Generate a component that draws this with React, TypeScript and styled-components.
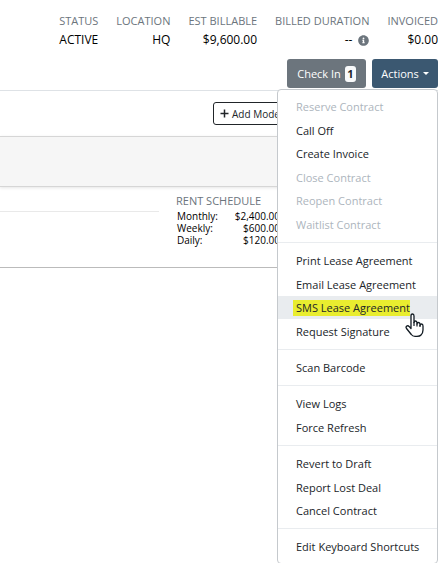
import React from "react";
import styled, { createGlobalStyle } from "styled-components";
import { FaInfoCircle } from "react-icons/fa";

const GlobalStyle = createGlobalStyle`
  *, *::before, *::after { box-sizing: border-box; }
  body {
    margin: 0;
    background: #fff;
    color: #000;
    font: 11px/18px "Open Sans", "Noto Sans", sans-serif;
  }
  button { font-family: inherit; cursor: pointer; }
`;

const Page = styled.main`
  display: flex;
  flex-direction: column;
  min-height: 100vh;
`;

const Stats = styled.dl`
  display: flex;
  justify-content: flex-end;
  gap: 18px;
  margin: 0;
  padding-top: 12px;
  white-space: nowrap;
`;

const Stat = styled.div`
  text-align: right;
`;

const StatLabel = styled.dt`
  color: #6c757d;
  line-height: 18px;
`;

const StatValue = styled.dd`
  display: flex;
  align-items: center;
  justify-content: flex-end;
  gap: 6px;
  margin: 0;
  font-size: 12px;
  line-height: 20px;
  svg { color: #6c757d; }
`;

const Toolbar = styled.div`
  display: flex;
  justify-content: flex-end;
  gap: 6px;
  padding: 9px 0 2px;
  border-bottom: 1px solid #dee2e6;
`;

const ToolButton = styled.button<{ $primary?: boolean }>`
  display: flex;
  align-items: center;
  justify-content: center;
  gap: 4px;
  width: ${(p) => (p.$primary ? 66 : 79)}px;
  height: 29px;
  padding: 0;
  border: 0;
  border-radius: 3px;
  background: ${(p) => (p.$primary ? "#3b5871" : "#6c757d")};
  color: #fff;
  font-size: 11px;
  white-space: nowrap;
`;

const Badge = styled.span`
  padding: 0 2px;
  border-radius: 3px;
  background: #f8f9fa;
  color: #212529;
  font-weight: 700;
  line-height: 16px;
  min-width: 11px;
`;

const Caret = styled.span`
  border: 3px solid transparent;
  border-top-color: #fff;
  border-bottom: 0;
`;

const Dropdown = styled.div`
  position: relative;
`;

const Menu = styled.div`
  position: absolute;
  z-index: 1;
  top: 100%;
  right: 0;
  width: 161px;
  margin-top: 1px;
  padding: 5px 0;
  border: 1px solid #c5c9cd;
  border-radius: 4px;
  background: #fff;
`;

const MenuGroup = styled.div`
  & + & {
    margin-top: 6px;
    padding-top: 6px;
    border-top: 1px solid #e9ecef;
  }
`;

const MenuItem = styled.button<{ $active?: boolean }>`
  display: flex;
  align-items: center;
  width: 100%;
  height: 23px;
  padding: 1px 0 0 15px;
  border: 0;
  background: ${(p) => (p.$active ? "#e9ecef" : "transparent")};
  color: #212529;
  font-size: 11px;
  line-height: 16px;
  text-align: left;
  white-space: nowrap;
  &:nth-child(even) { height: 24px; }
  &:disabled { color: #adb5bd; }
`;

const ItemText = styled.span<{ $marked?: boolean }>`
  padding: 0 0 0 3px;
  background: ${(p) => (p.$marked ? "#e9ed2f" : "transparent")};
`;

const Pointer = styled.svg`
  position: absolute;
  top: 223px;
  right: 13px;
  pointer-events: none;
`;

const ModelBar = styled.div`
  display: flex;
  justify-content: flex-end;
  padding: 11px 138px 11px 0;
`;

const AddButton = styled.button`
  display: flex;
  align-items: center;
  gap: 3px;
  width: 87px;
  height: 23px;
  padding: 0 0 0 6px;
  border: 1px solid #212529;
  border-radius: 3px;
  background: #fff;
  color: #212529;
  font-size: 10px;
  white-space: nowrap;
`;

const Band = styled.div`
  height: 51px;
  border: solid #d6d6d6;
  border-width: 1px 0;
  background: #f6f6f6;
  box-shadow: 0 1px 3px #0000001a;
`;

const Details = styled.section`
  display: flex;
  gap: 17px;
  padding: 5px 158px 21px 0;
  border-bottom: 1px solid #bbb;
`;

const Rule = styled.hr`
  flex: 1;
  height: 1px;
  margin: 19px 0 0;
  border: 0;
  background: #e9e9e9;
`;

const Schedule = styled.table`
  width: 104px;
  border-spacing: 0;
  font-size: 10px;
  line-height: 12px;
  white-space: nowrap;
  caption {
    color: #6c757d;
    font-size: 11px;
    line-height: 18px;
    text-align: left;
  }
  th { padding: 0 0 0 1px; font-weight: 400; text-align: left; }
  td { padding: 0; text-align: right; }
`;

type Entry = { text: string; off?: boolean; active?: boolean };
const groups: Entry[][] = [
  [
    { text: "Reserve Contract", off: true },
    { text: "Call Off" },
    { text: "Create Invoice" },
    { text: "Close Contract", off: true },
    { text: "Reopen Contract", off: true },
    { text: "Waitlist Contract", off: true },
  ],
  [
    { text: "Print Lease Agreement" },
    { text: "Email Lease Agreement" },
    { text: "SMS Lease Agreement", active: true },
    { text: "Request Signature" },
  ],
  [{ text: "Scan Barcode" }],
  [{ text: "View Logs" }, { text: "Force Refresh" }],
  [{ text: "Revert to Draft" }, { text: "Report Lost Deal" }, { text: "Cancel Contract" }],
  [{ text: "Edit Keyboard Shortcuts" }],
];

const stats: [string, string][] = [
  ["STATUS", "ACTIVE"],
  ["LOCATION", "HQ"],
  ["EST BILLABLE", "$9,600.00"],
  ["BILLED DURATION", "--"],
  ["INVOICED", "$0.00"],
];

const rates = [
  ["Monthly:", "$2,400.00"],
  ["Weekly:", "$600.00"],
  ["Daily:", "$120.00"],
];

export default function App() {
  return (
    <Page>
      <GlobalStyle />
      <Stats>
        {stats.map(([label, value]) => (
          <Stat key={label}>
            <StatLabel>{label}</StatLabel>
            <StatValue>
              {value}
              {label === "BILLED DURATION" && <FaInfoCircle size={11} />}
            </StatValue>
          </Stat>
        ))}
      </Stats>
      <Toolbar>
        <ToolButton>
          Check In <Badge>1</Badge>
        </ToolButton>
        <Dropdown>
          <ToolButton $primary aria-haspopup="menu" aria-expanded="true">
            Actions <Caret />
          </ToolButton>
          <Menu role="menu">
            {groups.map((group) => (
              <MenuGroup key={group[0].text} role="group">
                {group.map(({ text, off, active }) => (
                  <MenuItem key={text} role="menuitem" disabled={off} $active={active}>
                    <ItemText $marked={active}>{text}</ItemText>
                  </MenuItem>
                ))}
              </MenuGroup>
            ))}
            <Pointer width="19" height="24" viewBox="0 0 19 24" aria-hidden="true">
              <path
                d="M6 14V3Q6 1 7.500 1T9 3V9.500Q9 8 10.500 8T12 10V11Q12 9.500 13.500 9.500T15 11.500V12.500Q15 11 16.500 11T18 13V17Q18 20 16 22Q15 23.300 12 23.300H10Q7.500 23.300 6.300 21.500L1.500 15.500Q.5 14 1.800 13Q3 12.300 4.300 13.600L6 15.500Z"
                fill="#fff"
                stroke="#111a22"
                strokeWidth="1.300"
                strokeLinejoin="round"
              />
              <path d="M9 9V13M12 10.500V13.500M15 12V14" stroke="#111a22" strokeWidth="1.200" />
            </Pointer>
          </Menu>
        </Dropdown>
      </Toolbar>
      <ModelBar>
        <AddButton>
          <svg width="9" height="9" viewBox="0 0 9 9" aria-hidden="true">
            <path d="M4.500 .5V8.500M.5 4.500H8.500" stroke="#212529" strokeWidth="1.500" />
          </svg>
          Add Model
        </AddButton>
      </ModelBar>
      <Band />
      <Details>
        <Rule />
        <Schedule>
          <caption>RENT SCHEDULE</caption>
          <tbody>
            {rates.map(([period, amount]) => (
              <tr key={period}>
                <th scope="row">{period}</th>
                <td>{amount}</td>
              </tr>
            ))}
          </tbody>
        </Schedule>
      </Details>
    </Page>
  );
}
